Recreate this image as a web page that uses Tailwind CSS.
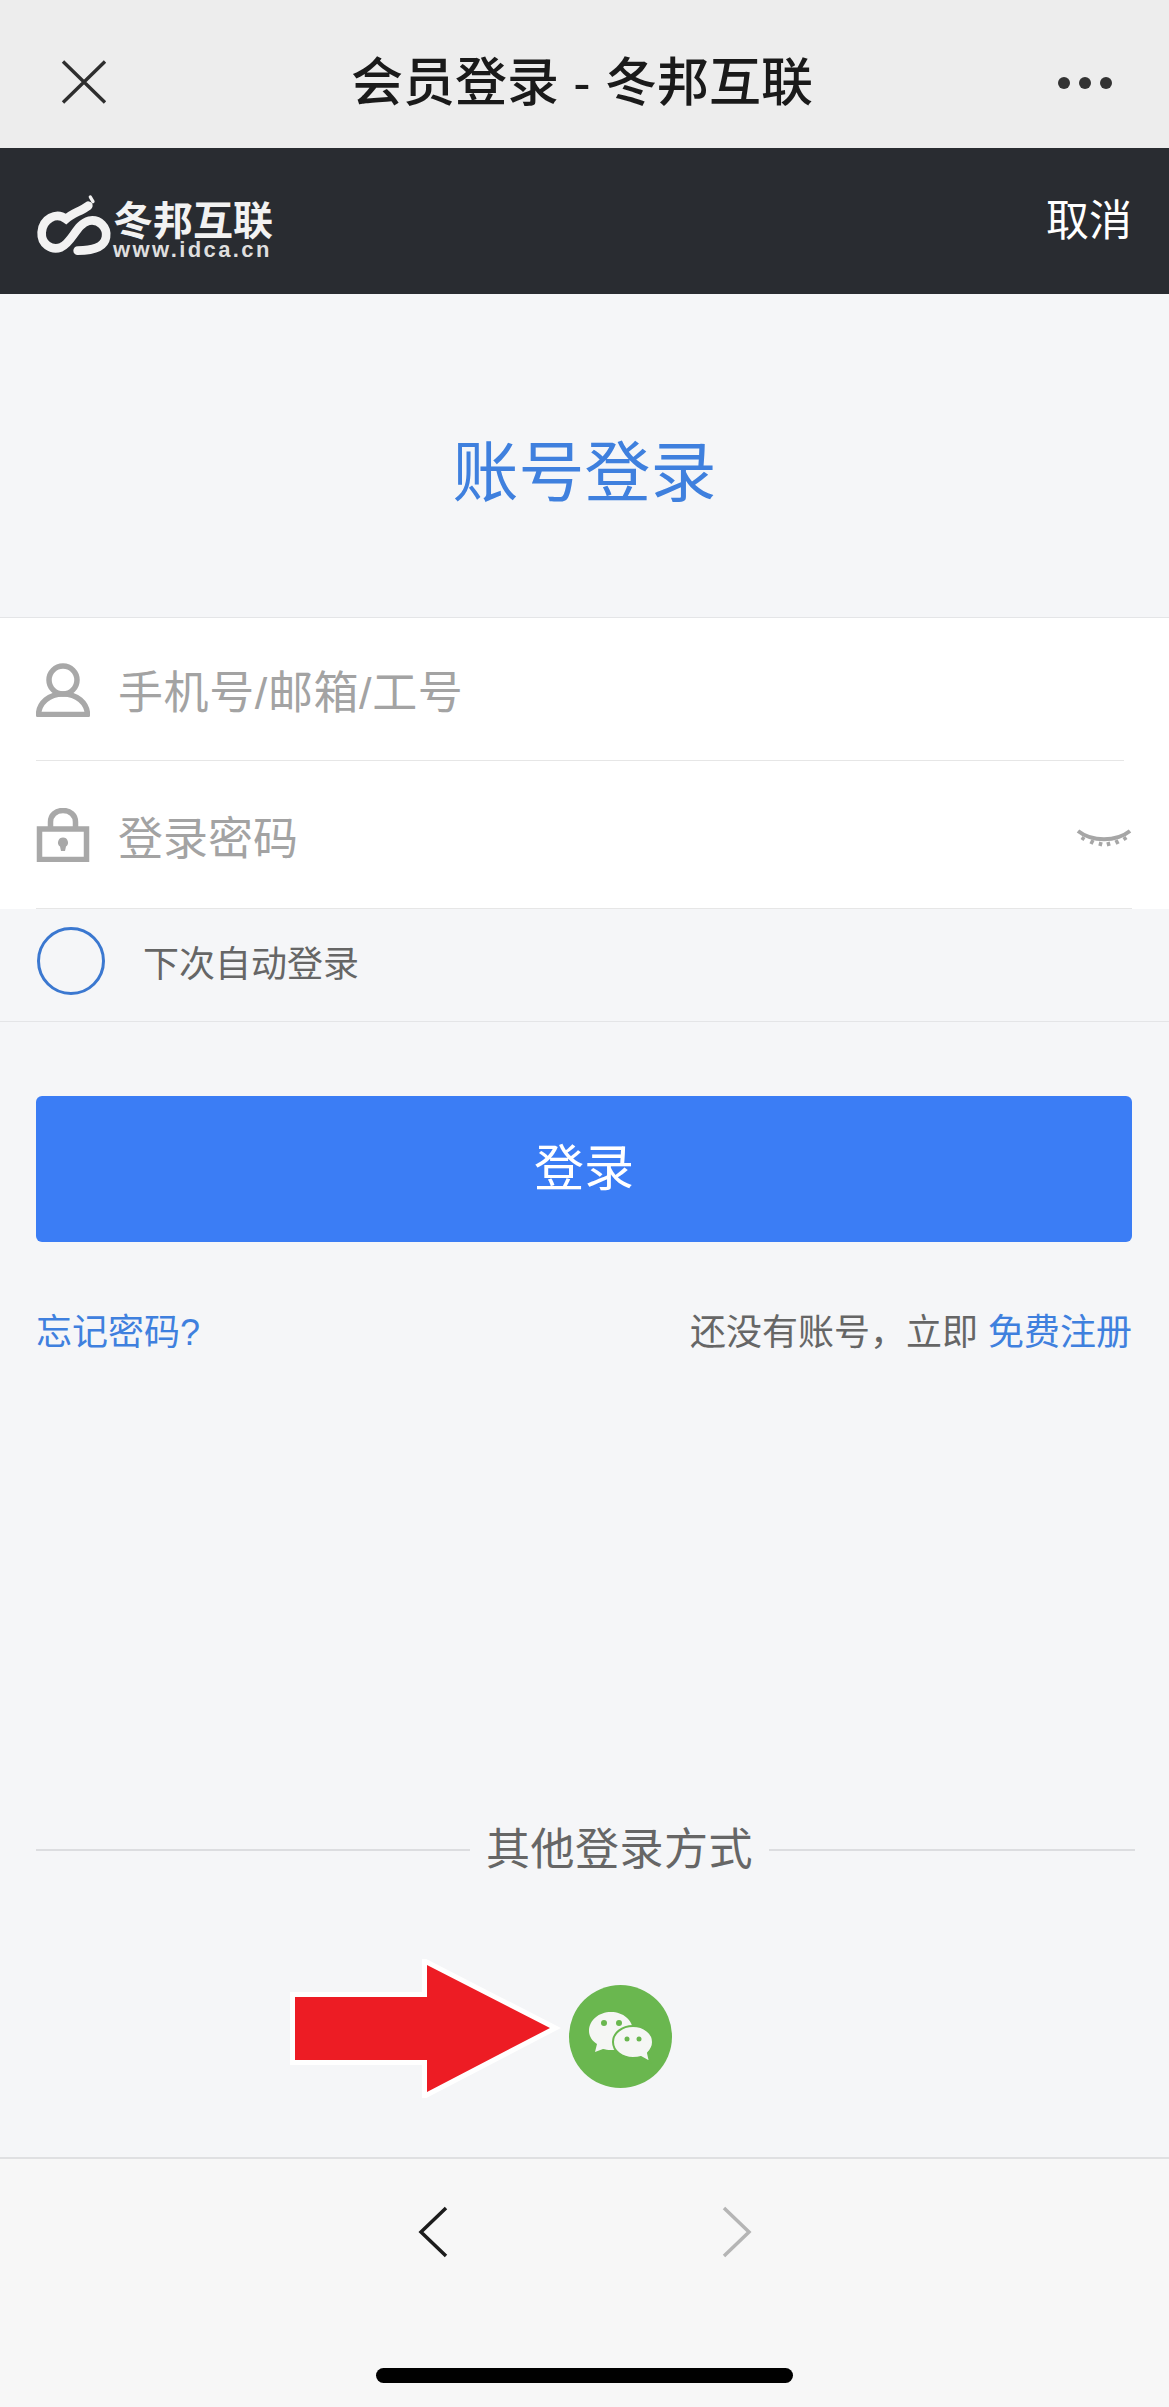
<!DOCTYPE html>
<html lang="zh-CN">
<head>
  <meta charset="UTF-8">
  <meta name="viewport" content="width=device-width, initial-scale=1.0">
  <title>会员登录 - 冬邦互联</title>
  <script src="https://cdn.jsdelivr.net/npm/@tailwindcss/browser@4"></script>
</head>
<body class="bg-[#f5f6f8] font-['Liberation_Sans','Noto_Sans_CJK_SC',sans-serif]">
  <div class="w-[1169px] h-[2407px] flex flex-col overflow-hidden">

    <!-- wechat title bar -->
    <div class="h-[148px] shrink-0 bg-[#ededed] flex items-center justify-between pl-[61px] pr-[57px] pt-[18px]">
      <svg class="w-[46px] h-[44px] mt-[-2px]" viewBox="0 0 46 44" fill="none" stroke="#2e2e2e" stroke-width="3.4"><path d="M2 1.5 44 42.5M44 1.5 2 42.5"/></svg>
      <div class="text-[52px] leading-none font-medium text-[#1a1a1a] ml-[-1px]">会员登录 - 冬邦互联</div>
      <div class="flex gap-[9px] mt-[-1px]">
        <span class="w-[12px] h-[12px] rounded-full bg-[#333]"></span>
        <span class="w-[12px] h-[12px] rounded-full bg-[#333]"></span>
        <span class="w-[12px] h-[12px] rounded-full bg-[#333]"></span>
      </div>
    </div>

    <!-- site header -->
    <div class="h-[146px] shrink-0 bg-[#292c31] flex items-center justify-between pl-[36px] pr-[37px]">
      <div class="flex items-start mt-[10px]">
        <svg class="w-[78px] h-[64px]" viewBox="105 75 234 192" fill="none" stroke="#f2f2f2" stroke-width="26" stroke-linecap="round">
          <path d="M262 110C238 128 215 132 195 150C165 128 125 150 122 190C120 225 150 245 180 235C215 220 225 165 265 155C295 150 320 175 315 205C310 235 280 245 230 245"/>
          <path d="M268 84 276 98" stroke-width="10"/>
        </svg>
        <div class="flex flex-col ml-[-1px] mt-[6px]">
          <span class="text-[40px] leading-[42px] font-bold text-[#f2f2f2]">冬邦互联</span>
          <span class="text-[22px] leading-[14px] font-bold text-[#dedede] tracking-[2.4px] mt-[1px]">www.idca.cn</span>
        </div>
      </div>
      <span class="text-[43px] leading-none text-white">取消</span>
    </div>

    <!-- heading -->
    <div class="h-[324px] shrink-0 flex items-center justify-center pt-[34px] border-b border-[#e4e5e7]">
      <h1 class="text-[66px] leading-none font-normal text-[#3f80de]">账号登录</h1>
    </div>

    <!-- form -->
    <div class="bg-white h-[291px] shrink-0 pl-[36px] pr-[37px]">
      <div class="h-[143px] flex items-center gap-[28px] pt-[9px] mr-[8px] border-b border-[#e6e6e6]">
        <svg class="w-[54px] h-[54px] mb-[7px]" viewBox="0 0 54 54" fill="none" stroke="#a8a8a8" stroke-width="5.5"><circle cx="27" cy="17" r="14"/><path d="M2.500 51.500C3 40 13 31 27 31S51 40 51.500 51.500Z" stroke-linejoin="round"/></svg>
        <span class="text-[45px] leading-none text-[#a3a3a3] tracking-[0.6px]">手机号/邮箱/工号</span>
      </div>
      <div class="h-[148px] flex items-center gap-[28px] pt-[9px] border-b border-[#e6e6e6]">
        <svg class="w-[54px] h-[54px] mb-[8px]" viewBox="0 0 54 54" fill="none" stroke="#a8a8a8" stroke-width="5.5"><rect x="3.500" y="21" width="47" height="30.500"/><path d="M14.500 20V14C14.500 7 20 2.500 27 2.500S39.500 7 39.500 14V20"/><path d="M27 29.500a5 5 0 0 1 3 9l-1 4.500h-4l-1-4.500a5 5 0 0 1 3-9Z" fill="#a8a8a8" stroke="none"/></svg>
        <span class="text-[45px] leading-none text-[#a3a3a3] flex-1">登录密码</span>
        <svg class="w-[56px] h-[20px]" viewBox="0 0 56 20" fill="none" stroke="#a6a6a6" stroke-width="3.500"><path d="M2 2C16 13 40 13 54 2" stroke-width="4"/><path d="M8 8 6 11M17 11 15 15M25 13 24 17M32 13 33 17M40 11 42 15M48 8 50 11"/></svg>
      </div>
    </div>

    <!-- remember me -->
    <div class="h-[113px] shrink-0 flex items-center pl-[37px] border-b border-[#e4e5e7]">
      <span class="w-[68px] h-[68px] rounded-full border-[3px] border-[#3b78d0] mb-[9px]"></span>
      <span class="text-[36px] leading-none text-[#666] ml-[38px]">下次自动登录</span>
    </div>

    <!-- submit and links -->
    <div class="pl-[36px] pr-[37px] pt-[74px] shrink-0">
      <button class="w-full h-[146px] rounded-[6px] bg-[#3b7df5] text-[50px] text-white">登录</button>
      <div class="h-[50px] mt-[66px] flex items-center justify-between text-[36px] leading-none">
        <a class="text-[#3f80de]">忘记密码?</a>
        <span class="text-[#666]">还没有账号，立即 <a class="text-[#3f80de]">免费注册</a></span>
      </div>
    </div>

    <!-- other login methods -->
    <div class="h-[50px] shrink-0 mt-[467px] flex items-center pl-[36px] pr-[34px]">
      <span class="w-[434px] h-[2px] bg-[#dcdde0]"></span>
      <span class="text-[44px] leading-none text-[#666] mx-[16px] tracking-[0.5px]">其他登录方式</span>
      <span class="flex-1 h-[2px] bg-[#dcdde0]"></span>
    </div>

    <div class="h-[139px] shrink-0 mt-[84px] flex items-start pl-[288px]">
      <svg class="w-[275px] h-[139px]" viewBox="0 0 275 139"><path d="M7 38H139V6L262 69 139 133V101H7Z" fill="#ed1c24" stroke="#fff" stroke-width="10" class="[paint-order:stroke]"/></svg>
      <div class="w-[103px] h-[103px] rounded-full bg-[#6ab74f] ml-[6px] mt-[26px]">
        <svg class="w-[103px] h-[103px]" viewBox="0 0 103 103">
          <path d="M42 27C54 27 64 35 64 46S54 65 42 65C39 65 36 64.500 34 64L26 67L28 59C23 56 20 51 20 46C20 35 30 27 42 27Z" fill="#f5f6f4"/>
          <path d="M64 41C75 41 84 48 84 57C84 61 82 65 79 68L81 77L72 72C69 73 67 73 64 73C53 73 44 66 44 57S53 41 64 41Z" fill="#f5f6f4" stroke="#6ab74f" stroke-width="2"/>
          <circle cx="35" cy="38" r="3" fill="#6ab74f"/><circle cx="50" cy="38" r="3" fill="#6ab74f"/>
          <circle cx="58" cy="54" r="2.500" fill="#6ab74f"/><circle cx="70" cy="54" r="2.500" fill="#6ab74f"/>
        </svg>
      </div>
    </div>

    <!-- wechat bottom bar -->
    <div class="flex-1 mt-[59px] bg-[#f7f7f7] border-t-2 border-[#dfe0e2] flex flex-col items-center">
      <div class="flex gap-[274px] mt-[47px]">
        <svg class="w-[30px] h-[52px]" viewBox="0 0 30 52" fill="none" stroke="#1c1c1c" stroke-width="3.500"><path d="M28 2 3 26 28 50"/></svg>
        <svg class="w-[30px] h-[52px]" viewBox="0 0 30 52" fill="none" stroke="#b5b5b5" stroke-width="3.500"><path d="M2 2 27 26 2 50"/></svg>
      </div>
      <div class="w-[417px] h-[15px] rounded-full bg-black mt-[110px]"></div>
    </div>
  </div>
</body>
</html>
